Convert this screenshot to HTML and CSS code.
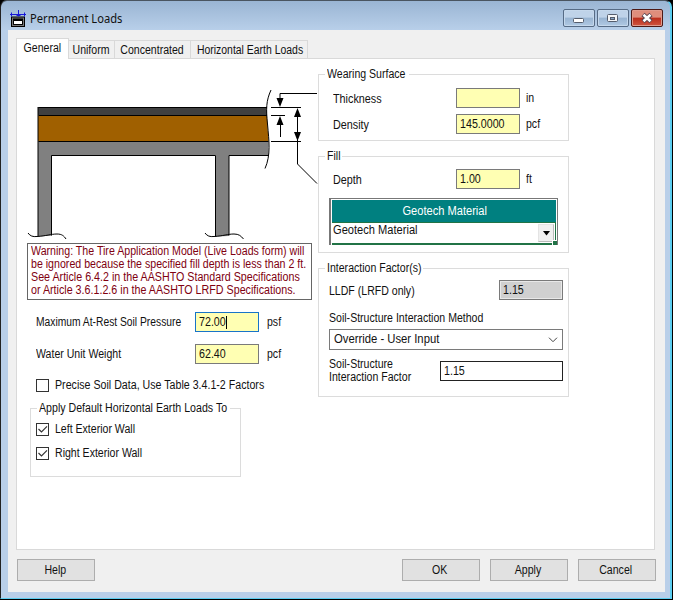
FILE: index.html
```html
<!DOCTYPE html>
<html lang="en">
<head>
<meta charset="utf-8">
<title>Permanent Loads</title>
<link rel="stylesheet" href="styles.css">
</head>
<body>
<div class="window">
  <header class="titlebar">
    <svg class="app-icon" width="16" height="17" viewBox="0 0 16 17">
      <path d="M1 6.500h14V17H1z" fill="#000"/>
      <path d="M2 8h12M2.500 8v7M13.500 8v7M2 15.500h12" stroke="#777" fill="none"/>
      <path d="M3.500 10.500h9v4h-9z" fill="#fff" stroke="#000"/>
      <path d="M0 4.500h16M1.500 2.500v4M14.500 2.500v4M8.500 0v6.500M6.500 5.500h4" stroke="#1818d8" fill="none"/>
    </svg>
    <h1><span class="t">Permanent Loads</span></h1>
    <div class="controls">
      <span class="ctl"><svg width="30" height="16" viewBox="0 0 30 16"><rect x="9.500" y="8.500" width="10" height="4" rx="1" fill="#fff" stroke="#555d6c"/></svg></span>
      <span class="ctl"><svg width="30" height="16" viewBox="0 0 30 16"><rect x="9.500" y="4.500" width="10" height="7" rx="1" fill="#f4f6f8" stroke="#555d6c"/><rect x="12.500" y="7.500" width="4" height="2" fill="#8aa6c6" stroke="#555d6c"/></svg></span>
      <span class="ctl close"><svg width="30" height="16" viewBox="0 0 30 16"><path d="M11 4.500l8 7M19 4.500l-8 7" stroke="#5a4550" stroke-width="4.600"/><path d="M11.500 4.800l7 6.400M18.500 4.800l-7 6.400" stroke="#fff" stroke-width="2.600"/></svg></span>
    </div>
  </header>
  <main class="client">
    <nav class="tabs">
      <span class="tab active"><span class="t">General</span></span>
      <span class="tab uniform"><span class="t">Uniform</span></span>
      <span class="tab conc"><span class="t">Concentrated</span></span>
      <span class="tab earth"><span class="t">Horizontal Earth Loads</span></span>
    </nav>
    <section class="panel">
      <div class="left">
        <svg class="diagram" width="301" height="184" viewBox="17 59 301 184">
          <path d="M38 141H268.500V155H229V236L215.500 236.500V155H52V235.500L38 236.500z" fill="#808080"/>
          <path d="M38 107H266.500L267 115.500H38z" fill="#404040"/>
          <path d="M38 115.500H267L268.500 141.500H38z" fill="#a06000"/>
          <g fill="none" stroke="#000">
            <path d="M38.500 107.500H267M38.500 115.500H267M38.500 141.500H268.500M38 107V236"/>
            <path d="M51.500 235.500V155.500H215.500V236.500M229 235.500V155.500H268.500"/>
            <path d="M271 90C266 101 266 109 267.500 124C269 141 271 155 265 168.500"/>
            <path d="M28 233C30 236 33 237 37 236.500C46 236 51 234 57 234C62 234 64 236 66 239"/>
            <path d="M205 233C207 236 210 237 214 236.500C223 236 228 234 234 234C239 234 241 236 243.500 239"/>
            <path d="M317 93.500H280V100M271 107.500H301M271 115.500H285M271 141.500H301M280.500 122V137M297.500 112V164L317 183.500"/>
          </g>
          <path d="M276.500 98h7l-3.500 9zM276.500 125h7l-3.500-9zM294 117h7l-3.500-9zM294 132h7l-3.500 9z"/>
        </svg>
        <div class="warning">
          <div class="t">Warning: The Tire Application Model (Live Loads form) will</div>
          <div class="t">be ignored because the specified fill depth is less than 2 ft.</div>
          <div class="t wide">See Article 6.4.2 in the AASHTO Standard Specifications</div>
          <div class="t wide">or Article 3.6.1.2.6 in the AASHTO LRFD Specifications.</div>
        </div>
        <div class="row soil"><span class="label"><span class="t">Maximum At-Rest Soil Pressure</span></span><span class="input focused"><span class="t">72.00</span><i class="caret"></i></span><span class="unit t">psf</span></div>
        <div class="row water"><span class="label"><span class="t">Water Unit Weight</span></span><span class="input"><span class="t">62.40</span></span><span class="unit t">pcf</span></div>
        <div class="check precise"><span class="box"></span><span class="t">Precise Soil Data, Use Table 3.4.1-2 Factors</span></div>
        <fieldset class="apply">
          <legend><span class="t">Apply Default Horizontal Earth Loads To</span></legend>
          <div class="check"><span class="box"><svg width="11" height="11" viewBox="0 0 11 11"><path d="M1.500 5l3 3L10 2.300"/></svg></span><span class="t">Left Exterior Wall</span></div>
          <div class="check"><span class="box"><svg width="11" height="11" viewBox="0 0 11 11"><path d="M1.500 5l3 3L10 2.300"/></svg></span><span class="t">Right Exterior Wall</span></div>
        </fieldset>
      </div>
      <div class="right">
        <fieldset class="wearing">
          <legend><span class="t">Wearing Surface</span></legend>
          <div class="row"><span class="label low"><span class="t">Thickness</span></span><span class="input"></span><span class="unit t">in</span></div>
          <div class="row"><span class="label low"><span class="t">Density</span></span><span class="input"><span class="t">145.0000</span></span><span class="unit t">pcf</span></div>
        </fieldset>
        <fieldset class="fill">
          <legend><span class="t">Fill</span></legend>
          <div class="row"><span class="label low"><span class="t">Depth</span></span><span class="input"><span class="t">1.00</span></span><span class="unit t">ft</span></div>
          <div class="sheet">
            <div class="sheet-head"><span class="t">Geotech Material</span></div>
            <div class="sheet-cell"><span class="t">Geotech Material</span><span class="drop"><svg width="7" height="5" viewBox="0 0 7 5"><path d="M0 0h7L3.500 4.500z"/></svg></span><i class="handle"></i></div>
          </div>
        </fieldset>
        <fieldset class="interaction">
          <legend><span class="t">Interaction Factor(s)</span></legend>
          <div class="lldf"><span class="t">LLDF (LRFD only)</span><span class="input readonly"><span class="t">1.15</span></span></div>
          <div class="method"><span class="t">Soil-Structure Interaction Method</span></div>
          <div class="select"><span class="t">Override - User Input</span><svg width="10" height="6" viewBox="0 0 10 6"><path d="M1 .7l4 4 4-4" fill="none" stroke="#444"/></svg></div>
          <div class="factor"><span class="t">Soil-Structure<br>Interaction Factor</span><span class="input plain"><span class="t">1.15</span></span></div>
        </fieldset>
      </div>
    </section>
    <footer class="buttons">
      <button class="help"><span class="t">Help</span></button><button><span class="t">OK</span></button><button><span class="t">Apply</span></button><button><span class="t">Cancel</span></button>
    </footer>
  </main>
</div>
</body>
</html>
```
FILE: styles.css
```css
* { box-sizing: border-box; }
body {
  margin: 0;
  width: 673px;
  height: 600px;
  overflow: hidden;
  background: #000;
  color: #111;
  font: 12px/13px "Liberation Sans", sans-serif;
  white-space: nowrap;
}
/* condensed interface text */
.t {
  display: inline-block;
  transform: scaleX(var(--condense, .88));
  transform-origin: 0 50%;
}
.tab .t, button .t, .sheet-head .t { transform-origin: 50% 50%; }
.window {
  width: 672px;
  height: 599px;
  padding: 0 5px 6px 7px;
  border: solid #5bcdf0;
  border-width: 1px 2px 1px 1px;
  border-left-color: #222;
  border-top-color: #4a5560;
  border-radius: 7px 7px 0 0;
  background: linear-gradient(#9ab5d3, #b9d0ea 30px, #b9cfe9 31px);
}
.titlebar { display: flex; height: 29px; padding-left: 2px; }
.app-icon { margin-top: 9px; }
h1 {
  --condense: .93;
  flex: 1;
  margin: 9px 0 0 4px;
  font: 12px/18px "Noto Sans", sans-serif;
}
.controls { display: flex; gap: 2px; padding: 8px 2px 0 0; }
.ctl {
  width: 32px;
  height: 18px;
  border: 1px solid #566b85;
  border-radius: 2px;
  box-shadow: inset 0 0 0 1px #c5d8ec;
  background: linear-gradient(#bfd3e9 45%, #98b4d2 50%, #b0c9e3);
}
.ctl svg { display: block; }
.close {
  border-color: #4d1915;
  box-shadow: inset 0 0 0 1px #e09a8c;
  background: linear-gradient(#df8d7c 45%, #bb2d1b 50%, #cf5540);
}
.client { height: 562px; padding: 8px 9px 0 8px; background: #f0f0f0; }
.tabs { display: flex; align-items: flex-end; height: 20px; }
.tab {
  display: flex;
  justify-content: center;
  height: 18px;
  border: 1px solid #d9d9d9;
  border-width: 1px 1px 0 0;
  line-height: 19px;
}
.tab.active {
  width: 53px;
  height: 21px;
  margin-bottom: -1px;
  padding-right: 1px;
  border-left-width: 1px;
  background: #fff;
  z-index: 1;
}
.uniform { width: 46px; }
.conc { width: 76px; }
.earth { --condense: .87; width: 117px; padding-left: 2px; }
.panel {
  display: flex;
  width: 639px;
  height: 492px;
  border: 1px solid #d9d9d9;
  background: #fff;
}
.left { width: 301px; }
.right { width: 251px; padding-top: 9px; }
.diagram { display: block; }
.warning {
  --condense: .885;
  width: 285px;
  height: 57px;
  margin: 0 0 12px 10px;
  padding: 1px 0 0 3px;
  border: 1px solid #666;
  color: #800010;
}
.warning .t { display: block; width: 310px; }
.warning .wide { --condense: .892; }
.row { display: flex; align-items: center; height: 20px; }
.soil, .water { padding-left: 19px; margin-bottom: 12px; }
.left .label { width: 159px; }
.soil .label { --condense: .857; }
.unit { margin-left: 6px; }
.left .unit { margin-left: 8px; }
.input {
  --condense: .89;
  display: flex;
  width: 64px;
  height: 20px;
  padding: 0 3px;
  border: 1px solid #7a7a7a;
  background: #ffffb3;
  line-height: 18px;
}
.focused { border-color: #1874c8; }
.caret { width: 1px; height: 13px; margin: 3px 0 0 -3px; background: #000; }
.check { display: flex; align-items: center; gap: 6px; height: 13px; }
.precise { --condense: .887; margin: 15px 0 10px 19px; }
.box { width: 13px; height: 13px; border: 1px solid #333; }
.box svg { display: block; fill: none; stroke: #333; stroke-width: 1.2; }
fieldset {
  min-width: 0;
  margin: 0;
  padding: 0;
  border: 1px solid #dcdcdc;
}
legend { height: 13px; margin-left: 6px; padding: 0 2px; }
.apply { width: 211px; height: 75px; margin: 0 0 0 13px; }
.apply legend { --condense: .885; width: 193px; }
.apply .check { margin: 8px 0 11px 5px; }
.wearing { height: 73px; margin-bottom: 9px; }
.wearing legend { width: 84px; }
.wearing .row { padding-left: 14px; margin: 7px 0 6px; }
.wearing .row + .row { margin-top: 0; }
.right .label { width: 123px; }
.right .low { --condense: .9; }
.fill { height: 103px; margin-bottom: 9px; }
.fill legend { width: 17px; }
.fill .row { padding-left: 14px; margin: 6px 0 9px; }
.low { padding-top: 2px; }
.sheet {
  --condense: .925;
  width: 229px;
  height: 47px;
  margin-left: 10px;
  padding: 1px 1px 0;
  border: 1px solid #777;
  border-width: 1px 1px 0 2px;
}
.sheet-head {
  height: 22px;
  padding-left: 2px;
  background: #008080;
  color: #fff;
  line-height: 23px;
  text-align: center;
}
.sheet-cell {
  position: relative;
  display: flex;
  justify-content: space-between;
  height: 23px;
  border: solid #217346;
  border-width: 1px 1px 2px 0;
  padding-left: 1px;
  line-height: 15px;
}
.drop {
  display: grid;
  place-items: center;
  width: 16px;
  height: 18px;
  margin: 1px 1px 0 0;
  border: 1px solid #bbb;
  border-left-color: #e4e4e4;
  border-top-color: #e4e4e4;
  background: #f0f0f0;
}
.handle {
  position: absolute;
  right: -2px;
  bottom: -2px;
  width: 5px;
  height: 5px;
  border: solid #fff;
  border-width: 1px 0 0 1px;
  background: #217346;
}
.interaction { height: 135px; padding-left: 10px; }
.interaction legend { width: 98px; margin-left: -4px; }
.lldf { display: flex; justify-content: space-between; width: 234px; margin-top: 5px; line-height: 22px; }
.lldf .input { line-height: 16px; }
.readonly { background: #d0d0d0; box-shadow: inset 0 0 0 1px #e8e8e8; padding-top: 1px; }
.method { margin: 10px 0 4px; }
.select {
  --condense: .94;
  display: flex;
  align-items: center;
  justify-content: space-between;
  width: 234px;
  height: 21px;
  padding: 0 4px;
  border: 1px solid #7a7a7a;
}
.factor { display: flex; justify-content: space-between; width: 234px; margin-top: 8px; }
.factor .input { width: 123px; margin-top: 3px; border-color: #222; background: #fff; }
.buttons { display: flex; gap: 10px; padding: 9px 0 0 1px; }
button {
  width: 78px;
  height: 22px;
  padding: 0 2px 0 0;
  border: 1px solid #adadad;
  background: #e1e1e1;
  color: #111;
  font: inherit;
}
.help { margin-right: 297px; }
```
